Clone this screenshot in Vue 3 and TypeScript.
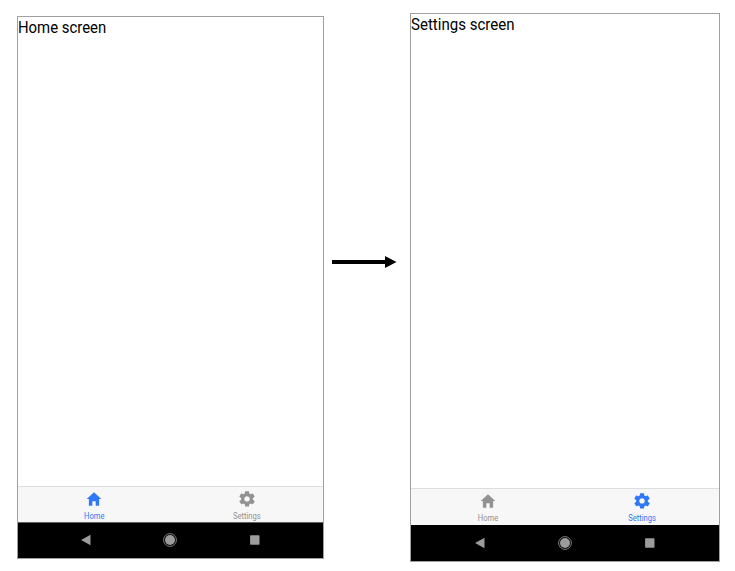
<script setup lang="ts">
type TabName = 'Home' | 'Settings'

interface Phone {
  title: string
  active: TabName
  variant: string
}

const tabs: TabName[] = ['Home', 'Settings']

const phones: Phone[] = [
  { title: 'Home screen', active: 'Home', variant: 'first' },
  { title: 'Settings screen', active: 'Settings', variant: 'second' },
]

const icons: Record<TabName, string> = {
  Home: 'M208 448V320h96v128h97.6V256H464L256 64 48 256h62.4v192z',
  Settings:
    'M413.967 276.8c1.06-6.235 1.06-13.518 1.06-20.8s-1.06-13.518-1.06-20.8l44.667-34.318c4.26-3.118 5.319-8.317 2.13-13.518L418.215 115.6c-2.129-4.164-8.507-6.235-12.767-4.164l-53.186 20.801c-10.638-8.32-23.407-15.601-36.16-20.801l-7.448-55.117c-1.06-4.154-5.319-8.318-10.638-8.318h-85.098c-5.318 0-9.577 4.164-10.637 8.318l-8.508 55.117c-12.767 5.2-24.464 12.482-36.171 20.801l-53.186-20.801c-5.319-2.071-10.638 0-12.767 4.164L49.1 187.365c-2.119 4.153-1.061 10.399 2.129 13.518L96.97 235.2c0 7.282-1.06 13.518-1.06 20.8s1.06 13.518 1.06 20.8l-44.668 34.318c-4.26 3.118-5.318 8.317-2.13 13.518L92.721 396.4c2.13 4.164 8.508 6.235 12.767 4.164l53.187-20.801c10.637 8.32 23.394 15.601 36.16 20.801l8.508 55.117c1.069 5.2 5.318 8.318 10.637 8.318h85.098c5.319 0 9.578-4.164 10.638-8.318l8.518-55.117c12.757-5.2 24.464-12.482 36.16-20.801l53.187 20.801c5.318 2.071 10.637 0 12.767-4.164l42.549-71.765c2.129-4.153 1.06-10.399-2.13-13.518l-46.8-34.318zm-158.499 52c-41.489 0-74.46-32.235-74.46-72.8s32.971-72.8 74.46-72.8 74.461 32.235 74.461 72.8-32.972 72.8-74.461 72.8z',
}

const viewBoxes: Record<TabName, string> = {
  Home: '0 0 512 512',
  Settings: '10 14 490 490',
}
</script>

<template>
  <main class="flow">
    <template v-for="(phone, index) in phones" :key="phone.title">
      <svg v-if="index > 0" class="arrow" viewBox="0 0 65 12" aria-hidden="true">
        <path d="M0 4h53V0l11.5 6-11.5 6V8H0z" />
      </svg>
      <section class="phone" :class="phone.variant">
        <div class="screen"><span class="title">{{ phone.title }}</span></div>
        <nav class="tabs">
          <div v-for="tab in tabs" :key="tab" class="tab" :class="{ active: tab === phone.active }">
            <svg class="tab-icon" :viewBox="viewBoxes[tab]" aria-hidden="true">
              <path :d="icons[tab]" />
            </svg>
            <span class="label">{{ tab }}</span>
          </div>
        </nav>
        <div class="system">
          <svg viewBox="0 0 16 16" aria-hidden="true"><path d="M3.1 8L12.5 2.8v10.4z" /></svg>
          <svg viewBox="0 0 16 16" aria-hidden="true">
            <circle cx="8" cy="8" r="5" />
            <circle class="ring" cx="8" cy="8" r="6.4" />
          </svg>
          <svg viewBox="0 0 16 16" aria-hidden="true">
            <rect x="3.1" y="3.3" width="9.4" height="9.4" rx=".6" />
          </svg>
        </div>
      </section>
    </template>
  </main>
</template>

<style>
body {
  margin: 0;
  background: #fff;
}
</style>

<style scoped>
.flow {
  box-sizing: border-box;
  width: 735px;
  height: 571px;
  padding: 13px 15px 0 17px;
  display: flex;
  align-items: flex-start;
  font-family: Roboto, sans-serif;
}

.phone {
  box-sizing: border-box;
  flex: none;
  display: flex;
  flex-direction: column;
  border: 1px solid #a0a0a0;
  background: #fff;
}

.first {
  width: 307px;
  height: 543px;
  margin-top: 3px;
}

.second {
  width: 310px;
  height: 549px;
}

.screen {
  flex: 1;
  padding-top: 2px;
}

.title {
  display: block;
  font-size: 14.9px;
  line-height: 18px;
  color: #000;
  transform: scaleY(1.05);
}

.second .title {
  font-size: 15.05px;
}

.tabs {
  box-sizing: border-box;
  height: 36px;
  display: flex;
  border-top: 1px solid #dedede;
  background: #f7f7f7;
}

.second .tabs {
  height: 37px;
}

.tab {
  flex: 1;
  display: flex;
  flex-direction: column;
  align-items: center;
  padding-top: 3px;
  color: #929292;
}

.tab.active {
  color: #2f79f6;
}

.tab-icon {
  width: 18px;
  height: 18px;
  fill: currentColor;
}

.label {
  margin-top: 4px;
  font-size: 7.6px;
  line-height: 10px;
  transform: scaleY(1.08);
}

.system {
  box-sizing: border-box;
  height: 36px;
  padding: 0 26px;
  display: flex;
  align-items: center;
  justify-content: space-around;
  background: #000;
}

.first .system {
  box-shadow: inset 0 1px #5c625c;
}

.system svg {
  width: 16px;
  height: 16px;
  fill: #9c9c9c;
}

.system .ring {
  fill: none;
  stroke: #9c9c9c;
  stroke-width: 0.8;
}

.arrow {
  flex: none;
  width: 65px;
  height: 12px;
  margin: 243px 13px 0 8px;
}
</style>
